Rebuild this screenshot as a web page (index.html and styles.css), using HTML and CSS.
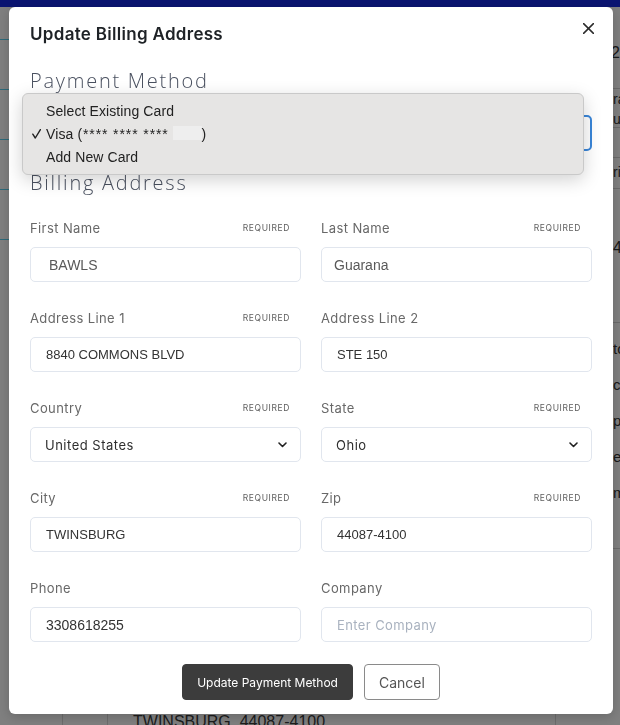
FILE: index.html
```html
<!DOCTYPE html>
<html lang="en">
<head>
<meta charset="utf-8">
<title>Update Billing Address</title>
<link rel="stylesheet" href="styles.css">
</head>
<body>
<div class="page">
  <div class="topbar"></div>
  <div class="page-body">
    <nav class="sidebar">
      <div class="side-head"></div>
      <div class="side-item"></div>
      <div class="side-item"></div>
      <div class="side-item"></div>
      <div class="side-item"></div>
      <div class="side-item"></div>
    </nav>
    <div class="col col-narrow"></div>
    <div class="col col-main"><p class="addr">TWINSBURG, 44087-4100</p></div>
    <div class="col col-right">
      <div class="r r1">25.00</div>
      <div class="r r2">rand<br>ure</div>
      <div class="r r3"></div>
      <div class="r r4">rice</div>
      <div class="r r5">4</div>
      <div class="r r6">to<br>co<br>pp<br>es<br>m</div>
    </div>
  </div>
</div>

<div class="backdrop"></div>

<div class="modal" role="dialog" aria-labelledby="modal-title">
  <h2 class="modal-title" id="modal-title">Update Billing Address</h2>
  <button class="close" aria-label="Close">
    <svg width="11" height="11" viewBox="0 0 11 11"><path d="M0.6 0.6 L10.4 10.4 M10.4 0.6 L0.6 10.4" stroke="#2b2b2b" stroke-width="1.5" fill="none" stroke-linecap="round"/></svg>
  </button>

  <h3 class="section-title">Payment Method</h3>
  <div class="pm-field">
    <div class="pm-select"></div>
    <ul class="popup" role="listbox">
      <li>Select Existing Card</li>
      <li class="selected">
        <svg class="check" width="9" height="10" viewBox="0 0 9 10"><path d="M0.8 5.2 L3.3 9 L8.4 0.6" stroke="#222" stroke-width="1.4" fill="none" stroke-linecap="round" stroke-linejoin="round"/></svg>
        Visa&nbsp;<span class="mask">(**** **** **** </span><span class="redact"></span>)
      </li>
      <li>Add New Card</li>
    </ul>
  </div>

  <h3 class="section-title section-title--billing">Billing Address</h3>

  <div class="form-grid">
    <div class="field">
      <div class="field-label"><label>First Name</label><span class="req">Required</span></div>
      <input class="input input--muted input--first" value="BAWLS">
    </div>
    <div class="field">
      <div class="field-label"><label>Last Name</label><span class="req">Required</span></div>
      <input class="input input--muted input--last" value="Guarana">
    </div>
    <div class="field">
      <div class="field-label"><label>Address Line 1</label><span class="req">Required</span></div>
      <input class="input" value="8840 COMMONS BLVD">
    </div>
    <div class="field">
      <div class="field-label"><label>Address Line 2</label></div>
      <input class="input" value="STE 150">
    </div>
    <div class="field">
      <div class="field-label"><label>Country</label><span class="req">Required</span></div>
      <div class="select-wrap">
        <select class="input select"><option>United States</option></select>
        <svg class="chev" width="9" height="6" viewBox="0 0 9 6"><path d="M1 1 L4.5 4.5 L8 1" stroke="#222" stroke-width="1.6" fill="none" stroke-linecap="round" stroke-linejoin="round"/></svg>
      </div>
    </div>
    <div class="field">
      <div class="field-label"><label>State</label><span class="req">Required</span></div>
      <div class="select-wrap">
        <select class="input select"><option>Ohio</option></select>
        <svg class="chev" width="9" height="6" viewBox="0 0 9 6"><path d="M1 1 L4.5 4.5 L8 1" stroke="#222" stroke-width="1.6" fill="none" stroke-linecap="round" stroke-linejoin="round"/></svg>
      </div>
    </div>
    <div class="field">
      <div class="field-label"><label>City</label><span class="req">Required</span></div>
      <input class="input" value="TWINSBURG">
    </div>
    <div class="field">
      <div class="field-label"><label>Zip</label><span class="req">Required</span></div>
      <input class="input" value="44087-4100">
    </div>
    <div class="field">
      <div class="field-label"><label>Phone</label></div>
      <input class="input input--phone" value="3308618255">
    </div>
    <div class="field">
      <div class="field-label"><label>Company</label></div>
      <input class="input input--placeholder" placeholder="Enter Company">
    </div>
  </div>

  <div class="actions">
    <button class="btn btn-primary">Update Payment Method</button>
    <button class="btn btn-secondary">Cancel</button>
  </div>
</div>
</body>
</html>
```
FILE: styles.css
```css
* { box-sizing: border-box; }
html, body { margin: 0; height: 725px; overflow: hidden; }
body { font-family: "Inter", sans-serif; background: #fff; }

/* background page */
.topbar { height: 7px; background: #1529e2; }
.page-body { display: flex; height: 718px; }
.sidebar { width: 63px; flex: none; border-right: 1px solid #dadada; }
.side-head { height: 32px; }
.side-item { height: 50px; border-top: 1px solid #5cd4f5; }
.col-narrow { width: 45px; flex: none; border-right: 1px solid #dadada; }
.col-main { width: 448px; flex: none; border-right: 1px solid #dadada; padding: 705px 0 0 25px; }
.addr { margin: 0; font: 16px/20px "Liberation Sans", Arial, sans-serif; color: #3a3a3a; white-space: nowrap; }
.col-right { flex: 1; min-width: 0; overflow: hidden; font-family: "Liberation Sans", Arial, sans-serif; color: #333; white-space: nowrap; }
.r { border-bottom: 1px solid #d4d4d4; padding-left: 57px; }
.r1 { height: 82px; padding-top: 36px; padding-left: 55px; font-size: 16px; line-height: 20px; }
.r2 { height: 39px; font-size: 14px; line-height: 20px; }
.r3 { height: 30px; }
.r4 { height: 31px; padding-top: 5px; font-size: 14px; line-height: 18px; }
.r5 { height: 134px; padding-top: 49px; font-size: 16px; line-height: 20px; }
.r6 { height: 226px; padding-top: 8px; font-size: 15px; line-height: 36px; }

.backdrop { position: fixed; inset: 0; background: rgba(0, 0, 0, 0.5); }

/* modal */
.modal {
  position: fixed; left: 9px; top: 7px; width: 604px; height: 707px;
  background: #fff; border-radius: 6px;
  padding: 17px 21px 14px;
  box-shadow: 0 3px 12px rgba(0, 0, 0, 0.18);
}
.modal-title { margin: 0; font: 600 17px/20px "Inter", sans-serif; letter-spacing: 0.3px; color: #1e2226; }
.close { position: absolute; top: 16px; right: 19px; width: 11px; height: 11px; padding: 0; border: 0; background: none; display: block; }
.close svg { display: block; }

.section-title { margin: 25px 0 0; font: 300 20px/24px "Open Sans", sans-serif; letter-spacing: 1.75px; color: #4a5160; }
.section-title--billing { margin-top: 20px; }

.pm-field { position: relative; margin-top: 22px; height: 36px; }
.pm-select { height: 36px; border: 2px solid #3a86d9; border-radius: 5px; background: #fff; }
.popup {
  position: absolute; top: -22px; left: -8px; width: 562px; margin: 0;
  padding: 6px 0 5px; list-style: none;
  background: #e6e5e4; border: 1px solid #c9c9c9; border-radius: 6px;
  box-shadow: 0 5px 18px rgba(0, 0, 0, 0.18);
  font: 14px/23px "Liberation Sans", Arial, sans-serif; color: #222;
}
.popup li { position: relative; height: 23px; padding-left: 23px; white-space: nowrap; letter-spacing: 0.1px; }
.check { position: absolute; left: 9px; top: 6px; }
.mask { letter-spacing: 0.9px; }
.redact { display: inline-block; width: 29px; height: 14px; background: #eeeeee; vertical-align: -1px; margin-left: -1px; }

/* form */
.form-grid { margin-top: 25px; display: grid; grid-template-columns: 1fr 1fr; column-gap: 20px; row-gap: 28px; }
.field-label { display: flex; justify-content: space-between; align-items: center; height: 16px; padding-right: 11px; margin-bottom: 11px; }
.field-label label { font: 13px/16px "Inter", sans-serif; letter-spacing: 0.4px; color: #686868; }
.req { font: 8.5px/10px "Inter", sans-serif; text-transform: uppercase; letter-spacing: 0.6px; color: #5e5e5e; }

.input {
  display: block; width: 100%; height: 35px; margin: 0;
  border: 1px solid #e1e6ee; border-radius: 5px; padding: 0 15px;
  font: 13px "Liberation Sans", Arial, sans-serif; color: #333; background: #fff; outline: none;
}
.input--muted { font-size: 14px; color: #595959; }
.input--first { padding-left: 18px; }
.input--last { padding-left: 12px; }
.input--phone { font-size: 14px; }
.input--placeholder { font-family: "Inter", sans-serif; letter-spacing: 0.4px; }
.input--placeholder::placeholder { color: #a9b2bf; }

.select-wrap { position: relative; }
.select { appearance: none; -webkit-appearance: none; font-family: "Inter", sans-serif; letter-spacing: 0.5px; color: #2e2e2e; padding-left: 14px; }
.chev { position: absolute; right: 14px; top: 15px; display: block; }

.actions { margin-top: 22px; display: flex; justify-content: center; gap: 11px; }
.btn { height: 36px; border-radius: 4px; font-family: "Inter", sans-serif; margin: 0; }
.btn-primary { background: #3c3c3c; color: #fff; border: 1px solid #3c3c3c; font-size: 12px; letter-spacing: 0; padding: 0 14px; }
.btn-secondary { background: #fff; color: #555; border: 1px solid #8a8a8a; font-size: 14px; letter-spacing: 0; padding: 0 14px; }
```
